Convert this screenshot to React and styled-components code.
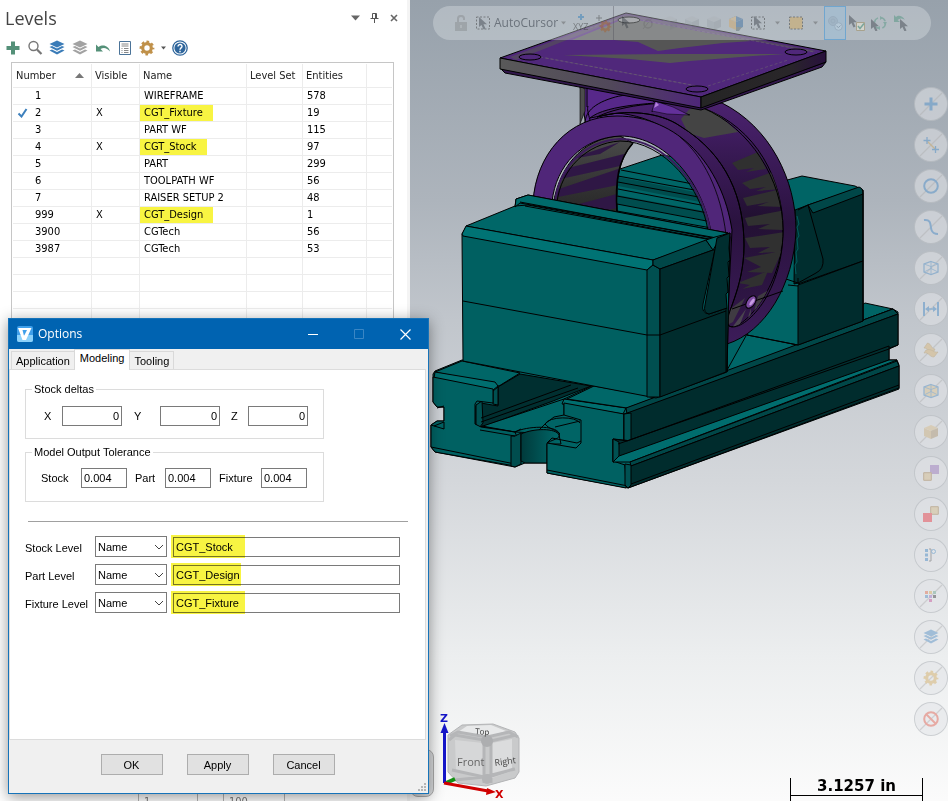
import React, { useState } from 'react';
import styled, { createGlobalStyle } from 'styled-components';

const GlobalStyle = createGlobalStyle`
  * { box-sizing: border-box; }
  body {
    margin: 0;
    overflow: hidden;
    background: #fff;
    color: #000;
    font-family: 'Liberation Sans', sans-serif;
    font-size: 11px;
  }
  button, input, select { font: inherit; color: inherit; }
`;

const Workspace = styled.div`
  position: relative;
  display: flex;
  height: 100vh;
`;

/* ---------- levels panel ---------- */

const LevelsPanel = styled.aside`
  flex: 0 0 410px;
  display: flex;
  flex-direction: column;
  background: #fff;
  border-right: 3px solid #f4f4f4;
  overflow: hidden;
  font-family: 'DejaVu Sans Condensed', 'Noto Sans', sans-serif;
`;

const PanelHeader = styled.header`
  display: flex;
  align-items: center;
  height: 36px;
  padding: 0 4px 0 5px;
`;

const PanelTitle = styled.h1`
  flex: 1;
  margin: 0;
  font: 400 18px/24px 'Open Sans', sans-serif;
  color: #444;
`;

const IconButton = styled.button`
  display: flex;
  align-items: center;
  justify-content: center;
  flex: none;
  width: ${(props) => props.$width || 22}px;
  height: 22px;
  padding: 0;
  border: 0;
  background: none;
  color: #666;
`;

const PanelTools = styled.div`
  display: flex;
  align-items: center;
  height: 26px;
  padding: 0 2px 3px;
`;

const TableFrame = styled.div`
  flex: 1;
  min-height: 0;
  overflow: hidden;
  margin: 0 13px 0 11px;
  padding: 1px 1px 0;
  border: 1px solid #c6c6c6;
`;

const LevelsTable = styled.table`
  width: 100%;
  table-layout: fixed;
  border-collapse: separate;
  border-spacing: 0;
  line-height: 16px;
`;

const HeadCell = styled.th`
  height: 24px;
  padding: 0 0 0 3px;
  border-right: 1px solid #ececec;
  border-bottom: 1px solid #ececec;
  font-weight: 400;
  text-align: left;
  white-space: nowrap;
  color: #222;
  &:last-child { border-right: 0; }
`;

const HeadSort = styled.div`
  display: flex;
  align-items: center;
  justify-content: space-between;
  padding-right: 7px;
`;

const Cell = styled.td`
  height: 17px;
  padding: 0 0 0 4px;
  border-right: 1px solid #ececec;
  border-bottom: 1px solid #ececec;
  white-space: nowrap;
  &:last-child { border-right: 0; }
`;

const NumberBox = styled.div`
  display: grid;
  grid-template-columns: 18px 1fr;
  align-items: center;
`;

const Mark = styled.span`
  display: block;
  width: fit-content;
  margin-left: -4px;
  padding: 0 10px 0 4px;
  background: ${(props) => (props.$on ? '#f8f442' : 'transparent')};
`;

const PanelFooter = styled.div`
  display: flex;
  flex: none;
  gap: 25px;
  height: 12px;
  padding-left: 138px;
  overflow: hidden;
`;

const FooterInput = styled.input`
  width: ${(props) => props.$width}px;
  height: 24px;
  padding: 0 5px;
  border: 1px solid #b4b4b4;
  color: #777;
`;

/* ---------- graphics view ---------- */

const Viewport = styled.main`
  position: relative;
  flex: 1;
  min-width: 0;
  overflow: hidden;
  background: linear-gradient(#97a1ab 0%, #adb4bc 25%, #c1c6cc 40%, #d4d7db 60%, #eceeef 82%, #fbfbfb 100%);
`;

const ModelDrawing = styled.svg`
  display: block;
`;

const FloatingBar = styled.div`
  position: absolute;
  top: 6px;
  left: 23px;
  right: 17px;
  height: 34px;
  display: flex;
  align-items: center;
  padding-left: 17px;
  border-radius: 17px;
  background: rgba(225, 229, 234, 0.36);
`;

const BarItem = styled.button`
  display: flex;
  flex: none;
  align-items: center;
  justify-content: center;
  width: ${(props) => props.$width || 22}px;
  height: 34px;
  padding: 0;
  border: ${(props) => (props.$active ? '1px solid #70a6cf' : '0')};
  background: ${(props) => (props.$active ? 'rgba(150, 190, 220, 0.45)' : 'none')};
  svg { opacity: ${(props) => (props.$faint ? 0.22 : 0.42)}; }
`;

const CursorLabel = styled.span`
  font: 12px/16px 'Open Sans', sans-serif;
  color: #6b737c;
`;

const BarRule = styled.span`
  width: 2px;
  height: 34px;
  border-left: 1px solid rgba(70, 70, 80, 0.35);
`;

const SideBar = styled.div`
  position: absolute;
  top: 87px;
  right: 0;
  display: flex;
  flex-direction: column;
  gap: 7px;
`;

const RoundButton = styled.button`
  width: 34px;
  height: 34px;
  padding: 0;
  border: 1px solid rgba(150, 155, 160, 0.35);
  border-radius: 50%;
  background: rgba(225, 228, 231, 0.55);
  svg { display: block; opacity: 0.4; }
`;

const NavCube = styled.svg`
  position: absolute;
  left: 20px;
  bottom: 0;
`;

const HiddenTab = styled.div`
  position: absolute;
  left: 0;
  bottom: 4px;
  width: 24px;
  height: 48px;
  border: 1px solid #aaa;
  border-radius: 8px;
  background: #d8dadc;
`;

const ScaleBar = styled.div`
  position: absolute;
  right: 25px;
  bottom: 0;
  width: 133px;
  height: 23px;
  border: solid #000;
  border-width: 0 1px;
`;

const ScaleText = styled.div`
  height: 18px;
  border-bottom: 1px solid #000;
  font: 700 15px/16px 'DejaVu Sans', sans-serif;
  text-align: center;
`;

/* ---------- options dialog ---------- */

const Dialog = styled.section`
  position: absolute;
  left: 8px;
  top: 318px;
  width: 421px;
  height: 476px;
  display: flex;
  flex-direction: column;
  border: 1px solid #1673b9;
  background: #f0f0f0;
  box-shadow: 0 3px 14px rgba(0, 0, 0, 0.42);
`;

const TitleBar = styled.header`
  display: flex;
  align-items: center;
  flex: none;
  height: 30px;
  padding-left: 8px;
  background: #0063b1;
  color: #fff;
`;

const DialogTitle = styled.h2`
  flex: 1;
  margin: 0;
  padding-left: 5px;
  font: 400 12px/16px 'Open Sans', sans-serif;
`;

const WindowButton = styled.button`
  display: flex;
  align-items: center;
  justify-content: center;
  width: 46px;
  height: 30px;
  padding: 0;
  border: 0;
  background: none;
`;

const TabStrip = styled.div`
  display: flex;
  align-items: flex-end;
  height: 20px;
  padding-left: 2px;
`;

const Tab = styled.button`
  height: ${(props) => (props.$active ? 21 : 18)}px;
  margin: ${(props) => (props.$active ? '0 -1px -1px' : '0')};
  padding: ${(props) => (props.$active ? '0 5px 4px' : '0 4px')};
  border: 1px solid #d9d9d9;
  border-bottom: 0;
  background: ${(props) => (props.$active ? '#fff' : '#f0f0f0')};
  line-height: 16px;
  z-index: ${(props) => (props.$active ? 1 : 0)};
`;

const TabPage = styled.div`
  flex: 1;
  margin: 0 2px 0 0;
  padding: 12px 0 0 15px;
  border: 1px solid #dcdcdc;
  background: #fff;
`;

const Group = styled.fieldset`
  width: 299px;
  height: 57px;
  margin: 0 0 6px;
  padding: 0 0 0 15px;
  border: 1px solid #dcdcdc;
`;

const GroupTitle = styled.legend`
  margin-left: -9px;
  padding: 0 2px;
  line-height: 14px;
`;

const DeltaGrid = styled.div`
  display: grid;
  grid-template-columns: 21px 60px 12px 26px 60px 11px 17px 60px;
  align-items: center;
  padding-top: 10px;
`;

const ToleranceGrid = styled.div`
  display: grid;
  grid-template-columns: 40px 46px 8px 30px 46px 8px 42px 46px;
  align-items: center;
  padding-top: 9px;
`;

const Gap = styled.span``;

const TextBox = styled.input`
  width: 100%;
  height: 20px;
  padding: 0 2px;
  border: 1px solid #7a7a7a;
  border-radius: 0;
  background: #fff;
  text-align: ${(props) => props.$align || 'left'};
  outline: 0;
`;

const Rule = styled.hr`
  width: 380px;
  margin: 19px 0 14px 3px;
  border: 0;
  border-top: 1px solid #a0a0a0;
`;

const LevelRow = styled.div`
  display: grid;
  grid-template-columns: 70px 72px 227px;
  column-gap: 6px;
  align-items: center;
  height: 21px;
  margin-bottom: 7px;
`;

const LevelLabel = styled.label`
  padding-top: 3px;
  white-space: nowrap;
`;

const SelectBox = styled.div`
  display: grid;
  align-items: center;
  margin-left: -6px;
  width: 72px;
  select, svg { grid-area: 1 / 1; }
  svg { justify-self: end; margin-right: 3px; pointer-events: none; }
`;

const Select = styled.select`
  appearance: none;
  width: 100%;
  height: 21px;
  padding: 0 2px;
  border: 1px solid #7a7a7a;
  border-radius: 0;
  background: #fff;
`;

const MarkedField = styled.div`
  position: relative;
  margin-left: -6px;
  width: 227px;
  &::after {
    content: '';
    position: absolute;
    left: -2px;
    top: -2px;
    width: ${(props) => props.$mark}px;
    height: 23px;
    background: #f8f442;
    mix-blend-mode: multiply;
    pointer-events: none;
  }
`;

const DialogFooter = styled.footer`
  display: flex;
  flex: none;
  justify-content: center;
  gap: 24px;
  height: 53px;
  padding: 14px 2px 0 0;
`;

const PushButton = styled.button`
  width: 62px;
  height: 21px;
  padding: 0;
  border: 1px solid #adadad;
  background: #e1e1e1;
`;

const Grip = styled.svg`
  position: absolute;
  right: 2px;
  bottom: 2px;
`;

const LEVELS = [
  { number: 1, name: 'WIREFRAME', entities: 578 },
  { number: 2, name: 'CGT_Fixture', entities: 19, visible: true, marked: true, active: true },
  { number: 3, name: 'PART WF', entities: 115 },
  { number: 4, name: 'CGT_Stock', entities: 97, visible: true, marked: true },
  { number: 5, name: 'PART', entities: 299 },
  { number: 6, name: 'TOOLPATH WF', entities: 56 },
  { number: 7, name: 'RAISER SETUP 2', entities: 48 },
  { number: 999, name: 'CGT_Design', entities: 1, visible: true, marked: true },
  { number: 3900, name: 'CGTech', entities: 56 },
  { number: 3987, name: 'CGTech', entities: 53 },
];

const EMPTY_ROWS = 32;

/* ---------- icons ---------- */

const Caret = () => (
  <svg width="9" height="6" viewBox="0 0 9 6"><path d="M0 0.5h9L4.500 5.500z" fill="#666" /></svg>
);

const SmallCaret = () => (
  <svg width="5" height="4" viewBox="0 0 5 4"><path d="M0 0.5h5L2.500 3.500z" fill="#555" /></svg>
);

const LayerShapes = ({ color }) => (
  <g fill={color}>
    <path d="M8 .5 15.500 4 8 7.500.5 4z" />
    <path d="M.5 7 3 6l5 2.500L13 6l2.500 1L8 10.800z" />
    <path d="M.5 10.500 3 9.500l5 2.500 5-2.500 2.500 1L8 14.500z" />
  </g>
);

const GearShape = ({ color }) => (
  <g fill="none" stroke={color}>
    <circle cx="8" cy="8" r="4.300" strokeWidth="3.200" />
    <circle cx="8" cy="8" r="6.200" strokeWidth="2.400" strokeDasharray="2.600 2.270" strokeDashoffset="1.300" />
  </g>
);

const CubeShape = ({ top, left, right }) => (
  <g>
    <path d="M8 1 15 4 8 7 1 4z" fill={top} />
    <path d="M1 4 8 7v8L1 12z" fill={left} />
    <path d="M8 7 15 4v8l-7 3z" fill={right} />
  </g>
);

const Pointer = ({ x = 0, y = 0, color = '#30363e' }) => (
  <path transform={`translate(${x} ${y})`} d="M0 0v10l2.500-2 2 4.500 2-1-2-4.300H8z" fill={color} />
);

const Icon = ({ size = 16, children }) => (
  <svg width={size} height={size} viewBox="0 0 16 16">{children}</svg>
);

const PANEL_TOOLS = [
  { name: 'Add level', icon: <Icon><path d="M6 1.500h4V6h4.500v4H10v4.500H6V10H1.500V6H6z" fill="#549078" /></Icon> },
  { name: 'Find', icon: <Icon><circle cx="6.500" cy="6" r="4.500" fill="none" stroke="#777" strokeWidth="1.400" /><path d="m10 9.500 4.500 4.500" stroke="#777" strokeWidth="2.200" /></Icon> },
  { name: 'Show levels', icon: <Icon><LayerShapes color="#3b7cb8" /></Icon> },
  { name: 'Hide levels', width: 24, icon: <Icon><LayerShapes color="#a2a2a2" /></Icon> },
  { name: 'Reset', icon: <Icon><path d="M1 4.500v7h7L5.500 9C9 7 12 8 15 11.500 14 6.500 8.500 3.500 3.500 7z" fill="#549078" /></Icon> },
  {
    name: 'Report',
    icon: (
      <Icon>
        <path d="M2.500 1.500h11v13h-11z" fill="#fff" stroke="#4b7398" />
        <path d="M4.500 4h7M4.500 6h7M4.500 8.500h1m1.500 0h4.500M4.500 10.500h1m1.500 0h4.500M4.500 12.500h1m1.500 0h4.500" stroke="#888" />
      </Icon>
    ),
  },
  { name: 'Settings', icon: <Icon><GearShape color="#c0914a" /></Icon> },
  { name: 'More', width: 11, icon: <SmallCaret /> },
  {
    name: 'Help',
    icon: (
      <Icon>
        <circle cx="8" cy="8" r="7.200" fill="#fff" stroke="#2f669c" strokeWidth="1.300" />
        <circle cx="8" cy="8" r="5.600" fill="#2f669c" />
        <path d="M6 6.500C6 3.800 10.300 4 10 6.600 9.800 7.900 8 8 8 9.700M8 10.700v1.500" fill="none" stroke="#fff" strokeWidth="1.400" />
      </Icon>
    ),
  },
];

const DashedBox = ({ fill = 'none' }) => (
  <path d="M1.500 2h13v12h-13z" fill={fill} stroke="#222" strokeDasharray="2 1.500" />
);

const GreyCube = () => <Icon><CubeShape top="#a6aab0" left="#858a91" right="#757a81" /></Icon>;

const BAR_TOOLS = [
  { name: 'Cursor', icon: <Icon><Pointer x={4} y={1} /></Icon> },
  { name: 'Circle', faint: true, icon: <Icon><circle cx="8" cy="9" r="4" fill="none" stroke="#555" strokeWidth="1.500" /><path d="m3 14 9-11" stroke="#555" /></Icon> },
  { name: 'Edges', faint: true, icon: <GreyCube /> },
  { name: 'Faces', faint: true, icon: <GreyCube /> },
  { name: 'Bodies', faint: true, icon: <GreyCube /> },
  {
    name: 'Solid selection',
    icon: (
      <Icon>
        <CubeShape top="#3b6da0" left="#d5a55c" right="#28619c" />
        <path d="M1 4 8 1v6z" fill="#e1b877" />
        <path d="M8 12h6l-3 4H8z" fill="#566" />
      </Icon>
    ),
  },
  { name: 'Window selection', icon: <Icon><DashedBox /><Pointer x={4} y={1} /></Icon> },
  { name: 'Window options', width: 16, icon: <SmallCaret /> },
  { name: 'Inside', icon: <Icon><DashedBox fill="#d9a648" /></Icon> },
  { name: 'Inside options', width: 17, icon: <SmallCaret /> },
  {
    name: 'Preview',
    active: true,
    icon: (
      <Icon>
        <circle cx="6" cy="6" r="4.500" fill="#9aaab9" stroke="#89a" />
        <circle cx="6" cy="6" r="2" fill="none" stroke="#89a" />
        <circle cx="11.500" cy="11.500" r="3.800" fill="#c9d8e3" stroke="#89a" />
        <path d="m9.500 11 2 1.500 2-2" fill="none" stroke="#678" />
      </Icon>
    ),
  },
  { name: 'Verify', icon: <Icon><Pointer x={0} y={0} /><path d="M7.500 7.500h8v8h-8z" fill="#fff5dc" stroke="#998045" /><path d="m9 11 2 2.500 4-5" fill="none" stroke="#2b8866" strokeWidth="1.500" /></Icon> },
  { name: 'Cycle', icon: <Icon><circle cx="9" cy="8" r="5.500" fill="none" stroke="#4a927b" strokeWidth="1.500" strokeDasharray="6 2.600" /><Pointer x={0} y={4} /><path d="m9 1 3 2-3 2zM16 7l-2 3-2-3zM9 11l-3 2 3 2z" fill="#4a927b" /></Icon> },
  { name: 'Undo selection', icon: <Icon><path d="M1 0v7h6L4.500 5C7 3 9 3 12 5 9 0 5 0 3 2z" fill="#3d8d73" /><Pointer x={7} y={4} /></Icon> },
];

const WireCube = ({ fill }) => (
  <g fill={fill || 'none'} stroke="#3b80bd">
    <path d="M8 1.500 15 4v8l-7 2.500L1 12V4z" strokeWidth="1.300" />
    <path d="M1 4l7 2.500L15 4M8 6.500v8M8 1.500v7M1 12l7-3.500 7 3.500" strokeWidth=".8" />
  </g>
);

const SIDE_TOOLS = [
  { name: 'Points', icon: <path d="M6.500 1.500h3v5h5v3h-5v5h-3v-5h-5v-3h5z" fill="#2a78bd" /> },
  { name: 'Lines', icon: <g fill="none"><path d="m4 4 8 8" stroke="#c0923f" strokeWidth="1.500" /><path d="M4 0v7M.5 3.500h7M12.500 9v7M9 12.500h7" stroke="#2a78bd" strokeWidth="1.300" /></g> },
  { name: 'Arcs', icon: <circle cx="8" cy="8" r="6.800" fill="none" stroke="#2a78bd" strokeWidth="2" /> },
  { name: 'Splines', icon: <path d="M1 1c8-1 6 6 7.500 10 1 3 3.500 4 6.500 4" fill="none" stroke="#2a78bd" strokeWidth="2" /> },
  { name: 'Wireframe', icon: <WireCube /> },
  { name: 'Dimensions', icon: <g fill="#2a78bd"><path d="M0 1h2v14H0zM14 1h2v14h-2zM2 8l4-3v2.200h4V5l4 3-4 3V8.800H6V11z" /></g> },
  { name: 'Surfaces', icon: <g fill="#d4aa62" stroke="#a3803f" strokeWidth=".6"><path d="M4.500 1 1 6c5 0 4 5 9 5l2-4c-4 0-3-5-7.500-6z" /><path d="m3 8-2 3c5-1 5 4 10 4l4-5c-5 1-6-4-12-2z" /></g> },
  { name: 'Solid edges', icon: <WireCube fill="#d9bd83" /> },
  { name: 'Solids', icon: <CubeShape top="#d6b67d" left="#c9a970" right="#a58c62" /> },
  { name: 'Result', plain: true, icon: <g><path d="M7 0h9v9H7z" fill="#9067b5" /><path d="M.7 7.700h7.600v7.600H.7z" fill="#d3b67d" stroke="#96713a" /></g> },
  { name: 'Group', plain: true, icon: <g><path d="M7.700.7h7.600v7.600H7.700z" fill="#d3b67d" stroke="#96713a" /><path d="M0 7h9v9H0z" fill="#e8202a" /></g> },
  { name: 'Attributes', plain: true, icon: <g><path d="M2 2h3v3H2zM2 6.500h3v3H2zM2 11h3v3H2z" fill="#2a78bd" /><path d="M6 2h2v12H6" fill="none" stroke="#444" /><circle cx="10.500" cy="4.500" r="2" fill="none" stroke="#2a78bd" /></g> },
  {
    name: 'Color',
    icon: (
      <g>
        <path d="M2 3h3v3H2z" fill="#e05a35" /><path d="M6 3h3v3H6z" fill="#d5a43f" /><path d="M10 3h3v3h-3z" fill="#5b9c81" />
        <path d="M2 7h3v3H2z" fill="#3b80bd" /><path d="M6 7h3v3H6z" fill="#8e5ac0" /><path d="M10 7h3v3h-3z" fill="#222" />
        <path d="M6 11h3v3H6z" fill="#c0388b" />
      </g>
    ),
  },
  { name: 'Level', icon: <LayerShapes color="#3b80bd" /> },
  { name: 'Options', icon: <GearShape color="#d1a44d" /> },
  { name: 'Clear', icon: <g fill="none" stroke="#e24a37" strokeWidth="2"><circle cx="8" cy="8" r="6.800" /><path d="m3 3 10 10" /></g> },
];

/* ---------- drawings ---------- */

const Model = () => (
  <ModelDrawing width="538" height="500" viewBox="410 0 538 500" role="img" aria-label="Fixture, stock and part">
    <defs>
      <linearGradient id="frontEdge"><stop offset="0" stopColor="#595959" /><stop offset=".55" stopColor="#51485a" /><stop offset="1" stopColor="#4e2679" /></linearGradient>
      <linearGradient id="sideEdge"><stop offset="0" stopColor="#252525" /><stop offset=".7" stopColor="#292629" /><stop offset="1" stopColor="#28103d" /></linearGradient>
      <linearGradient id="rim" x1="0" y1="0" x2="0" y2="1"><stop offset="0" stopColor="#4b226f" /><stop offset=".5" stopColor="#2a123f" /><stop offset="1" stopColor="#3c1c59" /></linearGradient>
      <linearGradient id="bandFill" x1="0" y1="0" x2="0" y2="1"><stop offset="0" stopColor="#4a2170" /><stop offset=".5" stopColor="#221032" /><stop offset="1" stopColor="#32174a" /></linearGradient>
      <linearGradient id="bore" x1="0" y1="0" x2="0" y2="1"><stop offset="0" stopColor="#4a4a4a" /><stop offset="1" stopColor="#262626" /></linearGradient>
      <linearGradient id="notch"><stop offset="0" stopColor="#003a3b" /><stop offset="1" stopColor="#006a6b" /></linearGradient>
      <clipPath id="band"><path d="M597 117C625 109 660 112 680 126 728 155 744 200 744 245 744 290 724 315 728 325 738 336 783 290 783 230 783 180 757 128 703 108Z" /></clipPath>
      <clipPath id="boreClip"><path d="M552 214C556 168 582 138 620 136L633 143C620 158 615 178 617 213z" /></clipPath>
    </defs>
    <g stroke="#000" strokeWidth="1" strokeLinejoin="round">
      {/* rail top seen behind the ring */}
      <path d="M617 170 662 155 725 165 740 215 730 240 617 215z" fill="#006566" />
      <path d="m618 177 82 16v9l-82-16zM617 195l92 17v9l-92-17z" fill="#004d4e" stroke="none" />
      <path d="m621 170 77 15M618 176l82 15M618 182l86 16M618 189l88 17M617 196l91 17M617 204l95 18M617 211l100 18" fill="none" />

      {/* base */}
      <path d="m726 331 21 4 51 10 67-42 28 6 5 3v33l-9 4v11l8 0 2 5v24L628 488l-81-15v-10l-22 0-10 4-80-15-4-5v-22l6-4h7v-14h-7l-4-5v-28l2-3 27-11 120 5z" fill="#006465" />
      <path d="m435 372 27-11 58 12-21 13-7-2z" fill="#006667" />
      <path d="m435 372 60 10 3 4-5 4-59-12z" fill="#006e6f" />
      <path d="m498 387 22-13 71 12-38 15-74 27-3-3v-19l5-3 17 3z" fill="#002f30" />
      <path d="m498 387-5 4v13l5 1zM476 405l6-4 1 22-4 5-3-4z" fill="#005051" />
      <path d="m481 418 90-33M481 422l97-34" fill="none" />
      <path d="m480 427 84-28v16l-10 2-8 6-10 10-21-1-31-5z" fill="#006566" />
      <path d="m481 427 34 5 2 5-2 29-80-14-4-5v-22l6-4h7v-14h-7l-4-5v-25l60 12v14l-16-2-2 3v20z" fill="#006162" />
      <path d="m431 425 13 4v-7M431 447l84 17" fill="none" />
      <path d="m515 436 6-3v31l-6 3-4-1v-30z" fill="#004d4e" />
      <path d="m482 426 33 6 6-3M480 430l35 6" fill="none" />
      <path d="M521 434c13-6 35-6 38 1l2 9-14 0v19l-22 0-4-2z" fill="url(#notch)" />
      <path d="M515 432c12-6 40-7 44 1 3 7-9 6-12 11M545 424c4-8 31-8 35-1M545 424c5 6 10 5 15 10M555 427l25-6" fill="none" />
      <path d="m564 399 28-13 64 11 237-88-267 99z" fill="#006768" />
      <path d="m564 399 62 9-3 6-61-10z" fill="#006e6f" />
      <path d="m564 403 60 11v26l-11-1v22l12 4 1 23-79-15v-30l29 5 5-5v-23l-17-5z" fill="#006162" />
      <path d="m547 443 5-5 25 5 4-2M547 470l81 16" fill="none" />
      <path d="m656 397 70-25 21-38 51 11-5 2-166 61-60-9 27-13z" fill="#006768" />
      <path d="m626 408 267-99 5 5-268 99-3 1z" fill="#004748" />
      <path d="M630 412 898 314v31L631 442l-7-2v-26z" fill="#002c2d" />
      <path d="m624 414 7-1v28l-7-1z" fill="#005152" />
      <path d="m613 439 14 2L889 346v14L626 459l-13 3z" fill="#002f30" />
      <path d="m613 439 6 3v17l-6 3z" fill="#005152" />
      <path d="M618 444 889 349" fill="none" />
      <path d="M619 456 889 360l8 0-267 102-17 0z" fill="#006d6e" />
      <path d="M630 462 897 361l2 5-268 100z" fill="#004748" />
      <path d="M631 466 899 366v22L628 488l-3-23z" fill="#002c2d" />
      <path d="m625 464 6 1v20l-3 3-3-3z" fill="#005152" />
      <path d="M631 484 899 385M437 408l7-2M444 422l-10 4" fill="none" />

      {/* right jaw */}
      <path d="m780 182 22-6 53 10 8 4v131l-65 24-51-10z" fill="#006465" />
      <path d="m808 205 51-17 4 6v67l-65 23v-71z" fill="#002c2d" />
      <path d="m808 205 51-18q4 1 4 7l-50 19z" fill="#004748" />
      <path d="m798 285 65-24v60l-65 24z" fill="#002c2d" />
      <path d="m795 210 13-5 15 54q1 10-7 14l-18 10-4 1z" fill="#002e2f" />
      <path d="m786 279 12 4v-5M788 285l10 1M798 210l10-5M863 190v131M747 335l51 10" fill="none" />

      {/* ring */}
      <path d="M580 86 586 127 600 118 660 118 722 103 700 85z" fill="#57288a" />
      <path d="m580 86 5 3v22l-5 13z" fill="#4c4c4c" strokeWidth=".6" />
      <path d="M590 118C605 105 660 100 722 103 770 127 796 180 796 230 794 285 765 332 727 344L718 250C716 180 690 120 617 113z" fill="url(#rim)" />
      <path d="M597 117C625 109 660 112 680 126 728 155 744 200 744 245 744 290 724 315 728 325 738 336 783 290 783 230 783 180 757 128 703 108 675 98 620 105 597 117z" fill="url(#bandFill)" />
      <g clipPath="url(#band)" stroke="none" fill="#303030">
        <path d="m681 119 10-12 20 1 27 24-34 6-16-5z" fill="#444" />
        <path d="m732 163 26-11 8 17-20 3 8-4-16 2z" />
        <path d="m742 183 33-12 7 18-26 2 10-4-16 2zM743 198l38-9 4 18-28-1 12-4-22 4zM745 218l40-8-2 20-25-1 12-5-22 2zM745 238l40-6-5 20-22 1 12-6-20 1zM744 258l38-7-10 22-25-1 14-5z" />
        <path d="m738 283 30-12-6 14-20 4 8-4z" />
        <path d="m729 310 16-12-12 24-8 4zM758 296l18-10-14 22-8 3z" fill="#3f3b42" />
        <path d="m731 329 15-20-9 23zM744 330l7-22-1 20zM754 322l2-16 4 8z" fill="#4a454f" />
      </g>
      <path d="M597 117C625 109 660 112 680 126 728 155 744 200 744 245 744 290 724 315 728 325 738 336 783 300 783 230 783 180 750 128 703 108" fill="none" />
      <path d="M585 127C584 115 590 105 612 98 630 92 650 95 655 103M652 112C654 104 658 102 663 107L690 115M590 120C588 113 587 109 588 106M587 87v20" fill="none" />
      <path d="m655 101-3 10 15 3 22 1-16-8z" fill="#63309a" strokeWidth=".5" />
      <path d="m656 102-2 6 5-3z" fill="#b380dc" stroke="none" />
      <path d="M552 214C556 168 582 138 620 136L633 143C620 158 615 178 617 213z" fill="url(#bore)" />
      <g clipPath="url(#boreClip)" fill="#2f1745" stroke="none">
        <path d="m560 170 72-18-12 14-64 14zM556 190l68-23-6 18-60 12zM556 210l61-16v14l-40 8zM566 160l54-18-20 12z" />
      </g>
      <path d="M633 143C618 160 615 180 617 213" fill="none" strokeWidth="1.500" />
      <path d="M533 202C536 155 568 116 617 116 678 116 722 165 732 230L728 310 712 240C707 190 670 136 620 136 582 138 556 165 552 202L542 230z" fill="#502679" />
      <path d="M680 137c23 19 41 54 46 98" fill="none" strokeWidth=".8" />
      <path d="M710 232C705 190 667 139 620 139 584 141 559 168 555 202" fill="none" stroke="#3c1b5c" strokeWidth="2" />
      <path d="M708 232C703 190 665 141 620 141 586 143 561 170 557 202" fill="none" />
      <path d="m732 309 51-18" fill="none" />
      <ellipse cx="751" cy="302" rx="4" ry="7" transform="rotate(35 751 302)" fill="#7d4ba2" />
      <ellipse cx="752" cy="302" rx="1.500" ry="4" transform="rotate(35 752 302)" fill="#c79ce2" stroke="none" />
      <path d="m797 216 2 8-2 3 2 9-2 3 1 10-2 3 1 10-2 3 1 9" fill="none" stroke="#005d5e" />

      {/* left jaw */}
      <path d="m515 207 1-8 12-4 200 38 2 4-3 135-71 26-193-37-1-127 4-7z" fill="#006061" />
      <path d="m466 226 49-20 13-1 192 36-14 1-53 18z" fill="#006768" />
      <path d="m515 207 1-8 12-4 200 38-11 5-197-35z" fill="#006a6b" />
      <path d="m525 206 187 34M520 202l198 37" fill="none" />
      <path d="m462 234 4-8 187 34v5l-6 5-184-34z" fill="#007374" />
      <path d="m647 270 6-5 7 4v128h-13z" fill="#004f50" />
      <path d="m653 260 53-20 7 10-53 19-7-4z" fill="#004748" />
      <path d="m660 269 53-19 13 0v122l-66 25z" fill="#002c2d" />
      <path d="m706 240 9-3 15-4-3 139V308l-18 6q-8-1-6-10l13-59-3 5z" fill="#006263" />
      <path d="m717 238 13-5-1 15 1 12-2 2 1 14-2 2 1 14-2 2 1 14-18 6q-6-1-4-9z" fill="#002e2f" />
      <path d="m463 301 184 34h13l66-24" fill="none" />

      {/* plate */}
      <path d="m500 68 5 5 196 37 121-43 4-5-125 44z" fill="#32174d" />
      <path d="M500 58 626 13 826 51 701 97z" fill="#50287b" />
      <g stroke="none" fill="#555">
        <path d="m572 40 54-22 50 9 76 14-29 2-43 5-22 3-20-9-24-2z" />
        <path d="m563 55 107-1 115 0-32 2-63 5-20 2-40-4z" />
        <path d="m510 57 116-43 2 2-112 44zM626 14l190 37-4 1-190-36z" opacity=".6" />
      </g>
      <path d="m540 57 157 29M546 58l146 27M590 28l34-11 190 35M708 86l80-26" fill="none" stroke="#696071" strokeDasharray="3 2" strokeWidth=".6" />
      <path d="M500 58 701 97v11L500 69z" fill="url(#frontEdge)" />
      <path d="M701 97 826 51v11l-125 46z" fill="url(#sideEdge)" />
      <g fill="#50287b">
        <ellipse cx="530" cy="57" rx="11" ry="3" />
        <ellipse cx="629" cy="20" rx="11" ry="3" fill="#8a8a8d" />
        <ellipse cx="796" cy="52" rx="11" ry="3" />
        <ellipse cx="697" cy="89" rx="11" ry="3" />
      </g>
    </g>
  </ModelDrawing>
);

const ViewCube = () => (
  <NavCube width="100" height="96" viewBox="430 705 100 96" role="img" aria-label="View orientation">
    <path d="m448 735 14-10 31-1 22 8 4 6v34l-4 6-29 8-28-3-10-11z" fill="#c9cacb" stroke="#b3b4b6" />
    <path d="m458 732 9-6 24-1 15 6-19 6z" fill="#e8e9ea" />
    <path d="m455 740 28 3v34l-27-5z" fill="#d6d7d8" />
    <path d="m492 743 20-4v32l-20 7z" fill="#dbdcdd" />
    <path d="m450 736 8-4 29 5 22-5 9 5M449 740l6-5 29 5v43M491 783v-42l25-6M452 770l32 7 31-8M455 780l29-3 5 0 25-8" fill="none" stroke="#b5b6b8" strokeWidth="3" />
    <circle cx="487" cy="741" r="6" fill="#adaeb0" />
    <circle cx="487" cy="779" r="5" fill="#b3b4b6" />
    <text x="457" y="766" fontFamily="Open Sans, sans-serif" fontSize="11" fill="#666">Front</text>
    <text x="495" y="766" fontFamily="Open Sans, sans-serif" fontSize="9" fill="#444" transform="rotate(-8 495 766)">Right</text>
    <text x="475" y="734" fontFamily="Open Sans, sans-serif" fontSize="8" fill="#333" transform="rotate(4 475 734)">Top</text>
    <path d="m446 783 9-4" stroke="#149014" strokeWidth="4" />
    <path d="M444.500 783V731" stroke="#1515c8" strokeWidth="3" />
    <path d="m444.500 723 4 10h-8z" fill="#1515c8" />
    <path d="m444 783 44 8" stroke="#d00000" strokeWidth="3" />
    <path d="m496 792-10 3 1-7z" fill="#d00000" />
    <text x="440" y="722" fontFamily="DejaVu Sans, sans-serif" fontWeight="700" fontSize="11" fill="#1515c8">Z</text>
    <text x="495" y="798" fontFamily="DejaVu Sans, sans-serif" fontWeight="700" fontSize="11" fill="#d00000">X</text>
  </NavCube>
);

const LevelField = ({ id, label, value, mark }) => (
  <LevelRow>
    <LevelLabel htmlFor={`${id}-value`}>{label}</LevelLabel>
    <SelectBox>
      <Select aria-label={`${label} match by`} defaultValue="Name">
        <option>Name</option>
        <option>Number</option>
      </Select>
      <svg width="10" height="6" viewBox="0 0 10 6"><path d="m1 1 4 4 4-4" fill="none" stroke="#444" /></svg>
    </SelectBox>
    <MarkedField $mark={mark}>
      <TextBox id={`${id}-value`} defaultValue={value} />
    </MarkedField>
  </LevelRow>
);

const TABS = ['Application', 'Modeling', 'Tooling'];

const OptionsDialog = () => {
  const [tab, setTab] = useState('Modeling');

  return (
    <Dialog role="dialog" aria-labelledby="options-title">
      <TitleBar>
        <svg width="16" height="16" viewBox="0 0 16 16">
          <rect width="16" height="16" rx="2" fill="#3f9fea" />
          <path d="M0 9h16v5a2 2 0 0 1-2 2H2a2 2 0 0 1-2-2z" fill="#8bd1fa" />
          <path d="M1 2h4l2 8 4-8h3.500L9 14H5.500z" fill="#fff" />
          <path d="M4 2h9v2H4z" fill="#fff" />
        </svg>
        <DialogTitle id="options-title">Options</DialogTitle>
        <WindowButton aria-label="Minimize"><svg width="10" height="10"><path d="M0 5.500h10" stroke="#fff" /></svg></WindowButton>
        <WindowButton aria-label="Maximize" disabled><svg width="10" height="10"><path d="M.5.500h9v9h-9z" fill="none" stroke="#3a86c4" /></svg></WindowButton>
        <WindowButton aria-label="Close"><svg width="11" height="11"><path d="m.5.500 10 10m0-10-10 10" stroke="#fff" strokeWidth="1.200" /></svg></WindowButton>
      </TitleBar>

      <TabStrip role="tablist">
        {TABS.map((name) => (
          <Tab key={name} role="tab" aria-selected={tab === name} $active={tab === name} onClick={() => setTab(name)}>
            {name}
          </Tab>
        ))}
      </TabStrip>

      <TabPage role="tabpanel">
        <Group>
          <GroupTitle>Stock deltas</GroupTitle>
          <DeltaGrid>
            <label htmlFor="dx">&nbsp;X</label>
            <TextBox id="dx" defaultValue="0" $align="right" />
            <Gap />
            <label htmlFor="dy">Y</label>
            <TextBox id="dy" defaultValue="0" $align="right" />
            <Gap />
            <label htmlFor="dz">Z</label>
            <TextBox id="dz" defaultValue="0" $align="right" />
          </DeltaGrid>
        </Group>
        <Group>
          <GroupTitle>Model Output Tolerance</GroupTitle>
          <ToleranceGrid>
            <label htmlFor="tol-stock">Stock</label>
            <TextBox id="tol-stock" defaultValue="0.004" />
            <Gap />
            <label htmlFor="tol-part">Part</label>
            <TextBox id="tol-part" defaultValue="0.004" />
            <Gap />
            <label htmlFor="tol-fixture">Fixture</label>
            <TextBox id="tol-fixture" defaultValue="0.004" />
          </ToleranceGrid>
        </Group>
        <Rule />
        <LevelField id="stock" label="Stock Level" value="CGT_Stock" mark={74} />
        <LevelField id="part" label="Part Level" value="CGT_Design" mark={70} />
        <LevelField id="fixture" label="Fixture Level" value="CGT_Fixture" mark={74} />
      </TabPage>

      <DialogFooter>
        <PushButton>OK</PushButton>
        <PushButton>Apply</PushButton>
        <PushButton>Cancel</PushButton>
      </DialogFooter>
      <Grip width="9" height="9" viewBox="0 0 9 9">
        <path d="M7 1h2v2H7zM4 4h2v2H4zM7 4h2v2H7zM1 7h2v2H1zM4 7h2v2H4zM7 7h2v2H7z" fill="#b5b5b5" />
      </Grip>
    </Dialog>
  );
};

const App = () => (
  <Workspace>
    <GlobalStyle />

    <LevelsPanel>
      <PanelHeader>
        <PanelTitle>Levels</PanelTitle>
        <IconButton $width={19} aria-label="Panel menu"><Caret /></IconButton>
        <IconButton $width={19} aria-label="Pin">
          <svg width="9" height="10" viewBox="0 0 9 10"><path d="M2.500 5.500v-5h4v5M5.500.5v5M.5 5.500h8M4.500 6v4" fill="none" stroke="#555" /></svg>
        </IconButton>
        <IconButton $width={19} aria-label="Close panel">
          <svg width="8" height="8" viewBox="0 0 8 8"><path d="m1 1 6 6m0-6L1 7" stroke="#666" strokeWidth="1.600" /></svg>
        </IconButton>
      </PanelHeader>

      <PanelTools>
        {PANEL_TOOLS.map((tool) => (
          <IconButton key={tool.name} $width={tool.width} aria-label={tool.name}>{tool.icon}</IconButton>
        ))}
      </PanelTools>

      <TableFrame>
        <LevelsTable>
          <colgroup>
            <col width="79" />
            <col width="48" />
            <col width="107" />
            <col width="56" />
            <col width="64" />
            <col />
          </colgroup>
          <thead>
            <tr>
              <HeadCell>
                <HeadSort>
                  Number
                  <svg width="9" height="5" viewBox="0 0 9 5"><path d="M0 5h9L4.500 0z" fill="#777" /></svg>
                </HeadSort>
              </HeadCell>
              <HeadCell>Visible</HeadCell>
              <HeadCell>Name</HeadCell>
              <HeadCell>Level Set</HeadCell>
              <HeadCell>Entities</HeadCell>
              <HeadCell />
            </tr>
          </thead>
          <tbody>
            {LEVELS.map((level) => (
              <tr key={level.number}>
                <Cell>
                  <NumberBox>
                    {level.active ? (
                      <svg width="11" height="10" viewBox="0 0 11 10"><path d="m1.500 5.500 3 3L9.500 1" fill="none" stroke="#3d80bd" strokeWidth="2" /></svg>
                    ) : <Gap />}
                    {level.number}
                  </NumberBox>
                </Cell>
                <Cell>{level.visible ? 'X' : ''}</Cell>
                <Cell><Mark $on={level.marked}>{level.name}</Mark></Cell>
                <Cell />
                <Cell>{level.entities}</Cell>
                <Cell />
              </tr>
            ))}
            {Array.from({ length: EMPTY_ROWS }, (_, i) => (
              <tr key={`empty-${i}`}><Cell /><Cell /><Cell /><Cell /><Cell /><Cell /></tr>
            ))}
          </tbody>
        </LevelsTable>
      </TableFrame>

      <PanelFooter>
        <FooterInput $width={60} aria-label="Level number" defaultValue="1" />
        <FooterInput $width={62} aria-label="Level count" defaultValue="100" />
      </PanelFooter>
    </LevelsPanel>

    <Viewport>
      <Model />
      <FloatingBar>
        <BarItem $faint aria-label="Lock"><Icon><path d="M5 8V3.500C5 0 11 0 11 3.500V5" fill="none" stroke="#555" strokeWidth="2" /><path d="M2 7h12v9H2z" fill="#555" /><path d="M7.500 10h1v3h-1z" fill="#ddd" /></Icon></BarItem>
        <BarItem aria-label="Selection"><Icon><DashedBox /><Pointer x={4} y={2} /></Icon></BarItem>
        <CursorLabel>AutoCursor</CursorLabel>
        <BarItem $width={11} aria-label="AutoCursor options"><SmallCaret /></BarItem>
        <BarItem $width={24} aria-label="Coordinates">
          <svg width="24" height="20" viewBox="0 0 24 20">
            <path d="M12 1v6M9 4h6" stroke="#1d75b8" strokeWidth="2" />
            <text x="4" y="17" fontFamily="Open Sans, sans-serif" fontSize="9" fill="#222">XYZ</text>
          </svg>
        </BarItem>
        <BarItem $width={20} aria-label="Cursor settings">
          <svg width="18" height="20" viewBox="0 0 18 20">
            <path d="M5 2v6M2 5h6" stroke="#333" />
            <g transform="translate(5 7) scale(.8)"><GearShape color="#aa5a20" /></g>
          </svg>
        </BarItem>
        <BarRule />
        {BAR_TOOLS.map((tool) => (
          <BarItem key={tool.name} $width={tool.width} $active={tool.active} $faint={tool.faint} aria-label={tool.name}>
            {tool.icon}
          </BarItem>
        ))}
      </FloatingBar>

      <SideBar>
        {SIDE_TOOLS.map((tool) => (
          <RoundButton key={tool.name} aria-label={tool.name}>
            <svg width="32" height="32" viewBox="0 0 32 32">
              {!tool.plain && <path d="M5 27 27 5" stroke="#aaa" strokeWidth="1.300" />}
              <g transform="translate(8 8)">{tool.icon}</g>
            </svg>
          </RoundButton>
        ))}
      </SideBar>

      <HiddenTab />
      <ViewCube />
      <ScaleBar><ScaleText>3.1257 in</ScaleText></ScaleBar>
    </Viewport>

    <OptionsDialog />
  </Workspace>
);

export default App;
